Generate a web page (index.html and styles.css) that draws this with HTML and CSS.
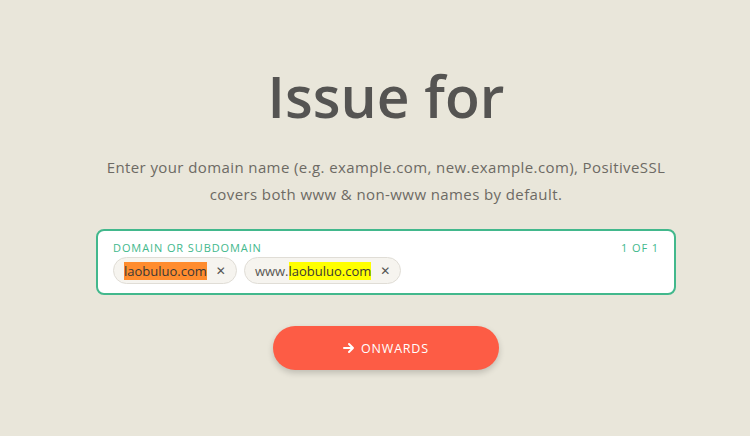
FILE: index.html
```html
<!DOCTYPE html>
<html>
<head>
<meta charset="utf-8">
<link rel="stylesheet" href="styles.css">
</head>
<body>
<main class="page">
  <h1 class="title">Issue for</h1>
  <p class="lead">Enter your domain name (e.g. example.com, new.example.com), PositiveSSL<br>covers both www &amp; non-www names by default.</p>
  <div class="field">
    <div class="field-head">
      <span class="label">DOMAIN OR SUBDOMAIN</span>
      <span class="count">1 OF 1</span>
    </div>
    <div class="chips">
      <span class="chip"><span class="hl-orange">laobuluo.com</span><span class="x">&#x2715;</span></span>
      <span class="chip">www.<span class="hl-yellow">laobuluo.com</span><span class="x">&#x2715;</span></span>
    </div>
  </div>
  <button class="btn"><svg class="arrow" viewBox="0 0 12 12" width="12" height="12"><path d="M1 6h9M6 2l4 4-4 4" fill="none" stroke="#fff" stroke-width="2" stroke-linecap="round" stroke-linejoin="round"/></svg>ONWARDS</button>
</main>
</body>
</html>
```
FILE: styles.css
```css
html, body {
  margin: 0;
  padding: 0;
  background: #e9e6da;
  font-family: "Open Sans", "DejaVu Sans", sans-serif;
}
.page {
  width: 750px;
  height: 436px;
  display: flex;
  flex-direction: column;
  align-items: center;
  box-sizing: border-box;
  padding-top: 63px;
  padding-left: 22px;
}
.title {
  margin: 0;
  font-size: 57px;
  line-height: 66px;
  font-weight: 600;
  color: #555452;
  letter-spacing: 0;
}
.lead {
  margin: 25px 0 0;
  text-align: center;
  font-size: 15px;
  line-height: 27px;
  color: #6d6a64;
  letter-spacing: 0.4px;
}
.field {
  margin-top: 21px;
  width: 580px;
  height: 66px;
  box-sizing: border-box;
  border: 2px solid #42b88c;
  border-radius: 8px;
  background: #fff;
  padding: 10px 15px 0 15px;
}
.field-head {
  display: flex;
  justify-content: space-between;
  font-size: 11px;
  line-height: 14px;
  letter-spacing: 0.9px;
  color: #42b88c;
}
.chips {
  display: flex;
  gap: 7px;
  margin-top: 2px;
}
.chip {
  display: inline-flex;
  align-items: center;
  height: 27px;
  box-sizing: border-box;
  border: 1px solid #e0ddd6;
  background: #f6f4ef;
  border-radius: 14px;
  padding: 0 10px 0 10px;
  font-size: 13px;
  letter-spacing: 0;
  color: #5a5855;
}
.hl-orange { background: #ff8c2e; color: #3a3836; }
.hl-yellow { background: #ffff00; color: #3a3836; }
.x {
  margin-left: 9px;
  font-size: 12px;
  font-weight: 700;
  color: #555;
}
.btn {
  margin-top: 31px;
  width: 226px;
  height: 44px;
  border: none;
  border-radius: 22px;
  background: #fd5c45;
  color: #fff;
  font-family: inherit;
  font-size: 12.5px;
  font-weight: 500;
  letter-spacing: 0.8px;
  box-shadow: 0 3px 6px rgba(0,0,0,0.18);
  display: flex;
  align-items: center;
  justify-content: center;
  gap: 6px;
}
.arrow { display: block; }
```
